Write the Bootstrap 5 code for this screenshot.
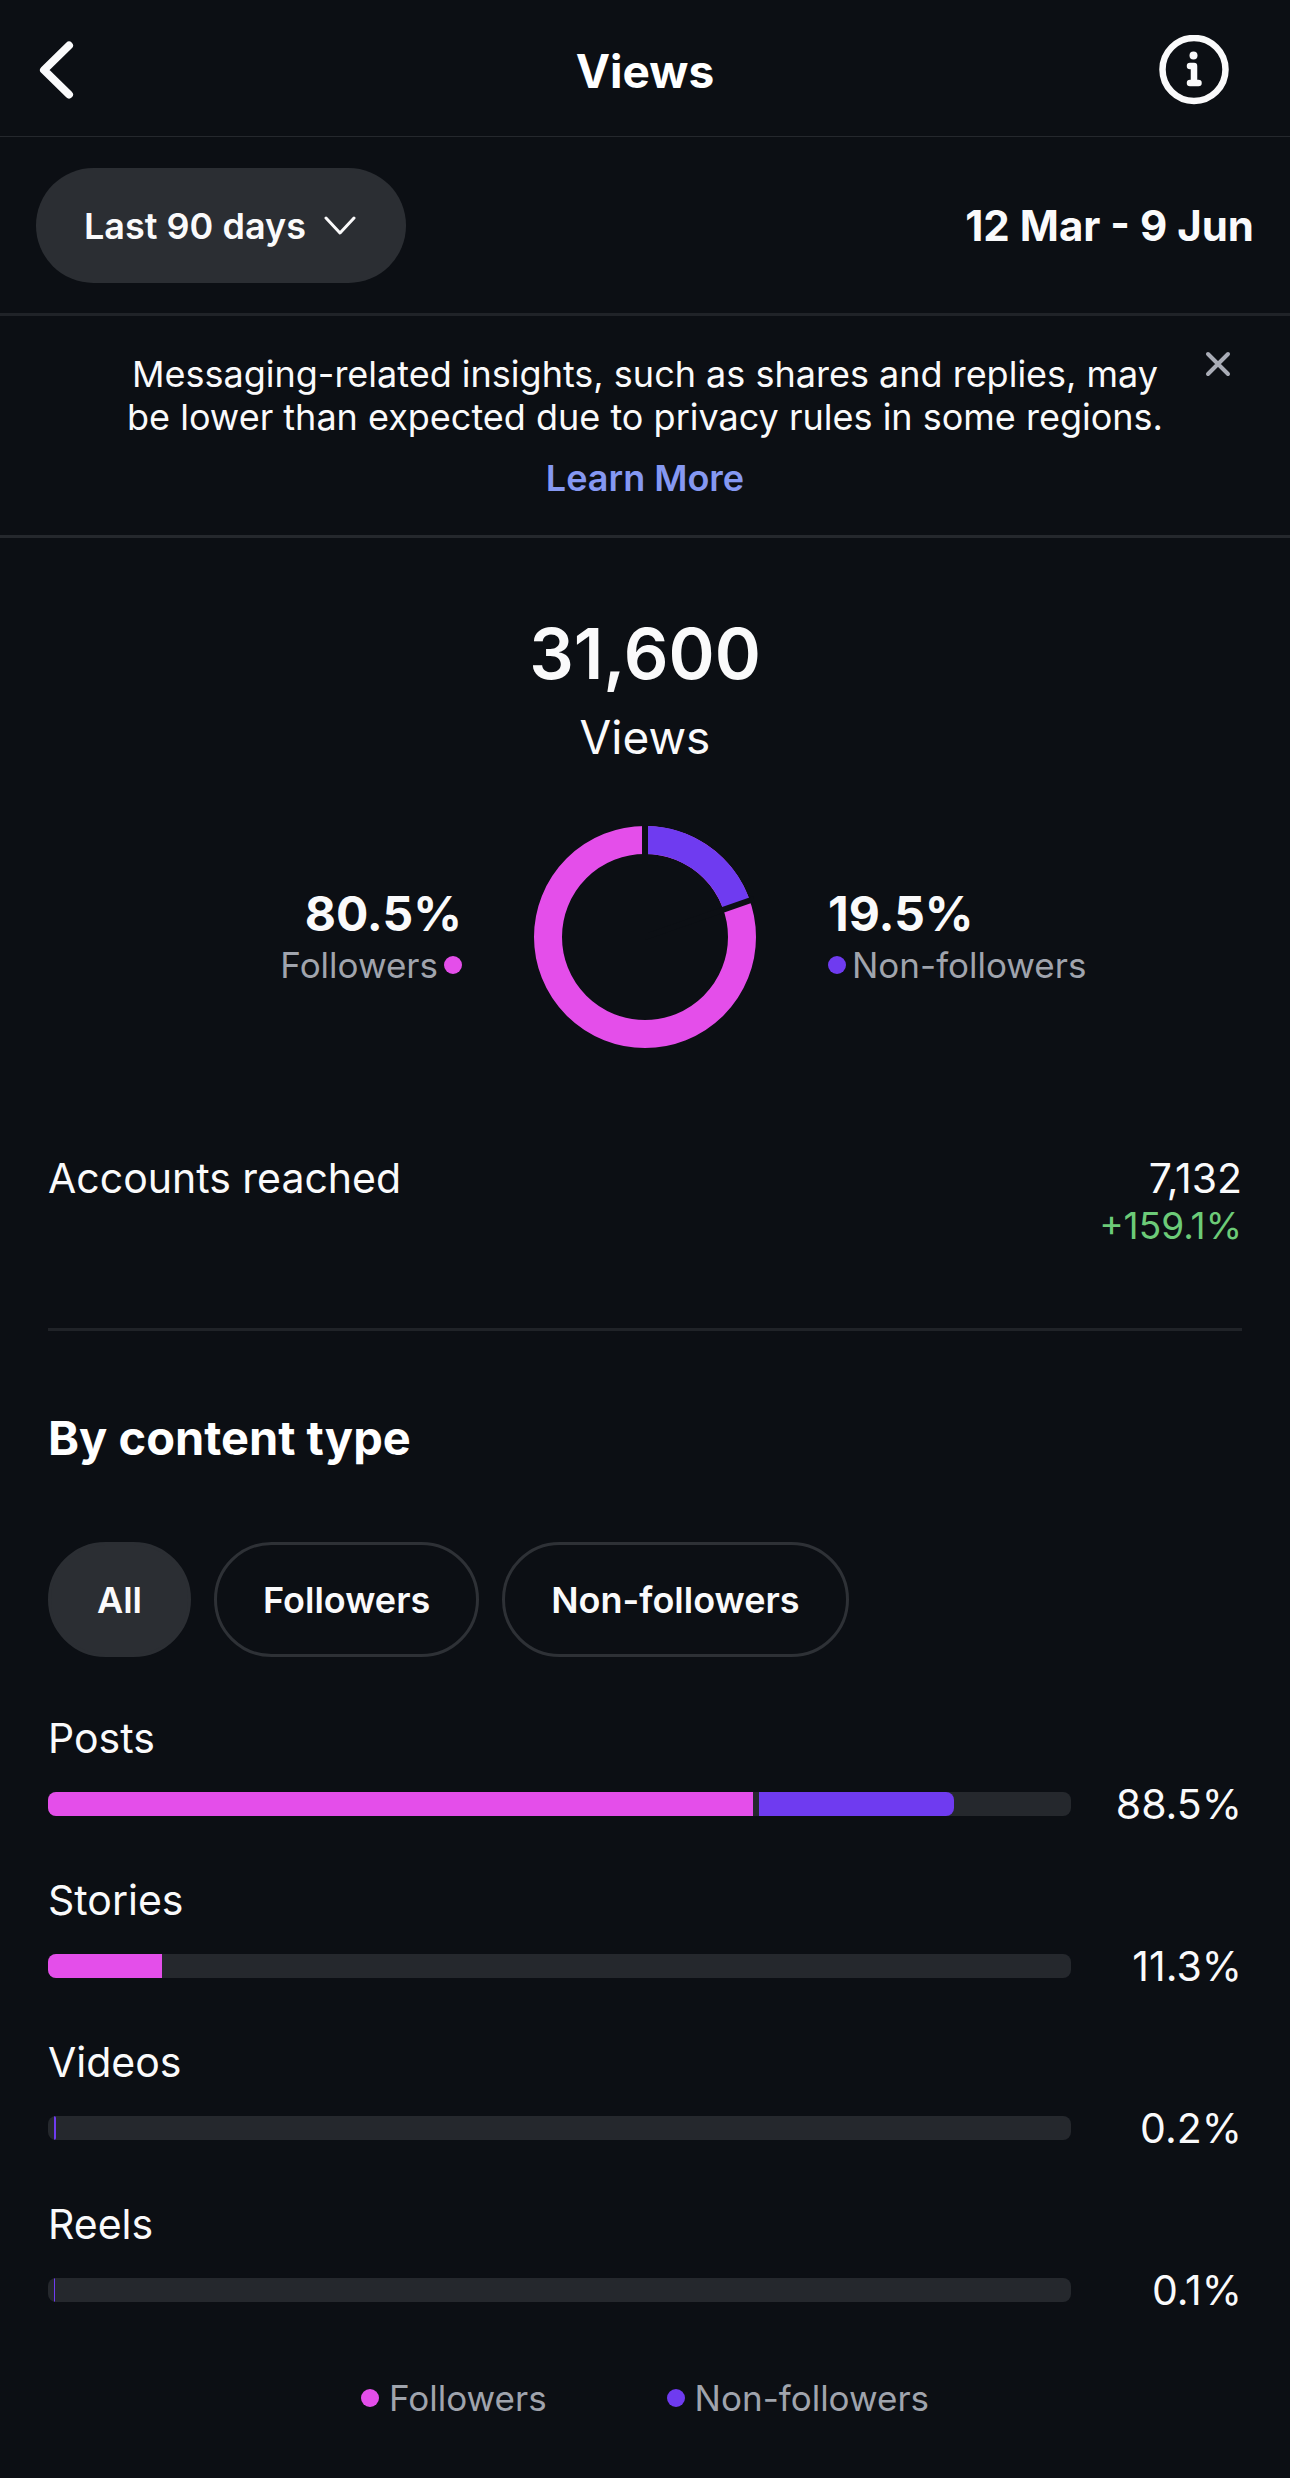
<!DOCTYPE html>
<html lang="en" data-bs-theme="dark">
<head>
<meta charset="utf-8">
<meta name="viewport" content="width=device-width, initial-scale=1">
<title>Views</title>
<link href="https://cdn.jsdelivr.net/npm/bootstrap@5.3.0/dist/css/bootstrap.min.css" rel="stylesheet">
<style>
  :root {
    --ink: #0c0f14;
    --bright: #fafafb;
    --muted: #a0a4ad;
    --pill: #2b2e33;
    --track: #25282d;
    --rule: #202328;
    --pink: #e44eea;
    --violet: #6f3bf0;
  }
  body { background: var(--ink); color: var(--bright); font-family: Inter, "Liberation Sans", sans-serif; font-size: 36px; line-height: 44px; }
  h1, h2, p { margin: 0; }
  svg { display: block; }

  .topbar { height: 137px; padding: 3px 36px 0; border-bottom: 1px solid #25282d; }
  .topbar h1 { padding-top: 2px; font-size: 46px; line-height: 56px; font-weight: 700; }
  .section-title { font-size: 47px; line-height: 56px; font-weight: 700; }
  .side { flex: 1 1 0; }
  .icon-btn { padding: 0; border: 0; color: var(--bright); }
  .info-btn { margin-right: 25px; }

  .filterbar { padding: 31px 36px 30px; border-bottom: 3px solid var(--rule); }
  .period { width: auto; height: 115px; padding: 0 100px 0 48px; border: 0; border-radius: 58px; color: var(--bright);
    font-size: 36px; line-height: 44px; font-weight: 600; background-color: var(--pill); }
  .form-select.period { background-position: right 50px center; background-size: 32px 20px;
    background-image: url("data:image/svg+xml,%3csvg xmlns='http://www.w3.org/2000/svg' viewBox='0 0 32 20'%3e%3cpath fill='none' stroke='%23fafafb' stroke-width='3' stroke-linecap='round' stroke-linejoin='round' d='M2 2l14 15L30 2'/%3e%3c/svg%3e"); }
  .range { font-size: 42px; line-height: 50px; font-weight: 700; }

  .notice { padding: 37px 116px 35px; border-bottom: 3px solid var(--track); }
  .notice p, .notice a { line-height: 43px; }
  .notice a { display: table; margin: 18px auto 0; color: #8598f2; font-weight: 600; }
  .notice-close { top: 34px; right: 58px; color: #a9acb6; }

  .insights { padding: 74px 48px 58px; }
  .total { font-size: 70px; line-height: 84px; font-weight: 600; }
  .total-label { margin-top: 13px; font-size: 46px; line-height: 56px; }
  .split { margin-top: 61px; gap: 72px; }
  .share { font-size: 48px; line-height: 56px; font-weight: 700; }
  .key { gap: 6px; color: var(--muted); font-size: 35px; line-height: 46px; }
  .dot { width: 18px; height: 18px; border-radius: 50%; flex: none; }
  .pink { background: var(--pink); }
  .violet { background: var(--violet); }

  .reached { margin-top: 105px; }
  .figure-lg { font-size: 41px; line-height: 50px; }
  .gain { color: #6ccb78; font-size: 37px; line-height: 46px; }
  .divider { margin: 79px 0; border: 0; border-top: 3px solid var(--rule); opacity: 1; }

  .chips { margin-top: 76px; gap: 23px; }
  .chip { height: 115px; padding: 0 46px; border: 3px solid #2e3136; border-radius: 58px; color: var(--bright); font-size: 36px; line-height: 44px; font-weight: 600; }
  .chip.active { background: var(--pill); border-color: var(--pill); color: var(--bright); }

  .bars { margin-top: 56px; display: grid; gap: 46px; }
  .bar-line { margin-top: 16px; }
  .meter { height: 24px; gap: 6px; border-radius: 8px; background: var(--track); }
  .meter .progress-bar { flex: none; }
  .meter .violet { border-radius: 0 8px 8px 0; }
  .bar-value { width: 171px; }
  .legend-row { margin-top: 60px; gap: 120px; }
  .legend-row .key { gap: 10px; }
</style>
</head>
<body>
<header class="topbar d-flex align-items-center">
  <div class="side">
    <button type="button" class="btn icon-btn" aria-label="Back">
      <svg width="42" height="66" viewBox="0 0 42 66" fill="none" stroke="currentColor" stroke-width="8" stroke-linecap="round" stroke-linejoin="round"><path d="M33 8.500L8 33l25 24.500"/></svg>
    </button>
  </div>
  <h1>Views</h1>
  <div class="side d-flex justify-content-end">
    <button type="button" class="btn icon-btn info-btn" aria-label="About views">
      <svg width="70" height="70" viewBox="0 0 70 70" fill="none" stroke="currentColor" stroke-linecap="round" stroke-linejoin="round"><circle cx="35" cy="34.500" r="31.500" stroke-width="6.500"/><circle cx="34.500" cy="20.500" r="4" fill="currentColor" stroke="none"/><path stroke-width="6.500" d="M31 31h4v17M31 48h8.500"/></svg>
    </button>
  </div>
</header>

<section class="filterbar d-flex align-items-center justify-content-between">
  <select class="form-select period" aria-label="Period">
    <option>Last 90 days</option>
  </select>
  <div class="range">12 Mar - 9 Jun</div>
</section>

<section class="notice position-relative text-center">
  <p>Messaging-related insights, such as shares and replies, may be lower than expected due to privacy rules in some regions.</p>
  <a href="#" class="text-decoration-none">Learn More</a>
  <button type="button" class="btn icon-btn notice-close position-absolute" aria-label="Dismiss">
    <svg width="28" height="28" viewBox="0 0 28 28" fill="none" stroke="currentColor" stroke-width="4" stroke-linecap="round"><path d="M4 4l20 20M24 4L4 24"/></svg>
  </button>
</section>

<main class="insights">
  <div class="text-center">
    <div class="total">31,600</div>
    <div class="total-label">Views</div>
  </div>

  <div class="split d-flex align-items-center">
    <div class="side text-end">
      <div class="share">80.5%</div>
      <div class="key d-flex align-items-center justify-content-end"><span>Followers</span><span class="dot pink"></span></div>
    </div>
    <svg width="222" height="222" viewBox="0 0 222 222" fill="none" role="img" aria-label="80.5% followers, 19.5% non-followers">
      <circle cx="111" cy="111" r="97" stroke="#e44eea" stroke-width="28"/>
      <circle cx="111" cy="111" r="97" stroke="#6f3bf0" stroke-width="28" pathLength="100" stroke-dasharray="19.500 80.500" transform="rotate(-90 111 111)"/>
      <path d="M111 111V-2M111 111L220 73" stroke="#0c0f14" stroke-width="6"/>
    </svg>
    <div class="side">
      <div class="share">19.5%</div>
      <div class="key d-flex align-items-center"><span class="dot violet"></span><span>Non-followers</span></div>
    </div>
  </div>

  <div class="reached d-flex justify-content-between">
    <div class="figure-lg">Accounts reached</div>
    <div class="text-end">
      <div class="figure-lg">7,132</div>
      <div class="gain">+159.1%</div>
    </div>
  </div>

  <hr class="divider">

  <h2 class="section-title">By content type</h2>
  <div class="chips d-flex flex-wrap">
    <button type="button" class="btn chip active" aria-pressed="true">All</button>
    <button type="button" class="btn chip" aria-pressed="false">Followers</button>
    <button type="button" class="btn chip" aria-pressed="false">Non-followers</button>
  </div>

  <div class="bars figure-lg">
    <div>
      <div>Posts</div>
      <div class="bar-line d-flex align-items-center">
        <div class="progress meter flex-grow-1"><div class="progress-bar pink" style="width:68.9%"></div><div class="progress-bar violet" style="width:19.1%"></div></div>
        <div class="bar-value text-end">88.5%</div>
      </div>
    </div>
    <div>
      <div>Stories</div>
      <div class="bar-line d-flex align-items-center">
        <div class="progress meter flex-grow-1"><div class="progress-bar pink" style="width:11.1%"></div></div>
        <div class="bar-value text-end">11.3%</div>
      </div>
    </div>
    <div>
      <div>Videos</div>
      <div class="bar-line d-flex align-items-center">
        <div class="progress meter flex-grow-1"><div class="progress-bar pink" style="width:0%"></div><div class="progress-bar violet" style="width:0.2%"></div></div>
        <div class="bar-value text-end">0.2%</div>
      </div>
    </div>
    <div>
      <div>Reels</div>
      <div class="bar-line d-flex align-items-center">
        <div class="progress meter flex-grow-1"><div class="progress-bar pink" style="width:0%"></div><div class="progress-bar violet" style="width:0.1%"></div></div>
        <div class="bar-value text-end">0.1%</div>
      </div>
    </div>
  </div>

  <div class="legend-row d-flex justify-content-center">
    <div class="key d-flex align-items-center"><span class="dot pink"></span><span>Followers</span></div>
    <div class="key d-flex align-items-center"><span class="dot violet"></span><span>Non-followers</span></div>
  </div>
</main>
<script src="https://cdn.jsdelivr.net/npm/bootstrap@5.3.0/dist/js/bootstrap.bundle.min.js"></script>
</body>
</html>
